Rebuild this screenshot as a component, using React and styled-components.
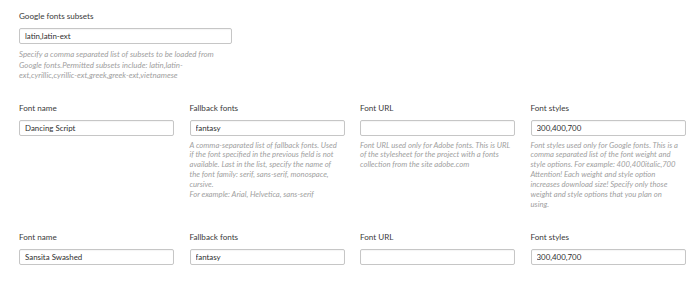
import React from "react";
import styled, { createGlobalStyle } from "styled-components";

const Global = createGlobalStyle`
  html, body { margin: 0; padding: 0; background: #ffffff; }
  body { font-family: Lato, "Open Sans", sans-serif; }
`;

const Page = styled.div`
  width: 700px;
  height: 285px;
  box-sizing: border-box;
  padding: 11px 0 0 19px;
  overflow: hidden;
  display: flex;
  flex-direction: column;
  gap: 22px;
`;

const Row = styled.div`
  display: grid;
  grid-template-columns: repeat(4, 155px);
  column-gap: 15.5px;
  align-items: start;
`;

const Field = styled.div`
  display: flex;
  flex-direction: column;
  width: ${(p) => p.$width || "155px"};
`;

const Label = styled.label`
  font-size: 8.1px;
  line-height: 11px;
  color: #3a3a3a;
  margin-bottom: 6px;
`;

const Input = styled.input`
  box-sizing: border-box;
  width: 100%;
  height: 16px;
  border: 1px solid #c6c6c6;
  border-radius: 2px;
  padding: 0 5px;
  font-family: Lato, "Open Sans", sans-serif;
  font-size: 7.9px;
  color: #2f2f2f;
  background: #fff;
  box-shadow: inset 0 1px 1px rgba(0, 0, 0, 0.04);
  outline: none;
`;

const Help = styled.p`
  margin: 5px 0 0;
  font-size: ${(p) => p.$size || "7.7px"};
  line-height: ${(p) => p.$lh || "9.9px"};
  font-style: italic;
  color: #a0a0a0;
  white-space: nowrap;
`;

const HelpLine = styled.span`
  display: block;
`;

function HelpText({ lines, ...rest }) {
  return (
    <Help {...rest}>
      {lines.map((l, i) => (
        <HelpLine key={i}>{l}</HelpLine>
      ))}
    </Help>
  );
}

const fallbackHelp = [
  "A comma-separated list of fallback fonts. Used",
  "if the font specified in the previous field is not",
  "available. Last in the list, specify the name of",
  "the font family: serif, sans-serif, monospace,",
  "cursive.",
  "For example: Arial, Helvetica, sans-serif",
];

const urlHelp = [
  "Font URL used only for Adobe fonts. This is URL",
  "of the stylesheet for the project with a fonts",
  "collection from the site adobe.com",
];

const stylesHelp = [
  "Font styles used only for Google fonts. This is a",
  "comma separated list of the font weight and",
  "style options. For example: 400,400italic,700",
  "Attention! Each weight and style option",
  "increases download size! Specify only those",
  "weight and style options that you plan on",
  "using.",
];

const subsetsHelp = [
  "Specify a comma separated list of subsets to be loaded from",
  "Google fonts.Permitted subsets include: latin,latin-",
  "ext,cyrillic,cyrillic-ext,greek,greek-ext,vietnamese",
];

const fields = [{ name: "Dancing Script" }, { name: "Sansita Swashed" }];

function FontRow({ name, showHelp }) {
  return (
    <Row>
      <Field>
        <Label>Font name</Label>
        <Input defaultValue={name} />
      </Field>
      <Field>
        <Label>Fallback fonts</Label>
        <Input defaultValue="fantasy" />
        {showHelp && <HelpText lines={fallbackHelp} />}
      </Field>
      <Field>
        <Label>Font URL</Label>
        <Input defaultValue="" />
        {showHelp && <HelpText lines={urlHelp} />}
      </Field>
      <Field>
        <Label>Font styles</Label>
        <Input defaultValue="300,400,700" />
        {showHelp && <HelpText lines={stylesHelp} />}
      </Field>
    </Row>
  );
}

export default function App() {
  return (
    <>
      <Global />
      <Page>
        <Field $width="213px">
          <Label>Google fonts subsets</Label>
          <Input defaultValue="latin,latin-ext" />
          <HelpText lines={subsetsHelp} $size="7.9px" $lh="10.5px" />
        </Field>
        {fields.map((f, i) => (
          <FontRow key={f.name} name={f.name} showHelp={i === 0} />
        ))}
      </Page>
    </>
  );
}
